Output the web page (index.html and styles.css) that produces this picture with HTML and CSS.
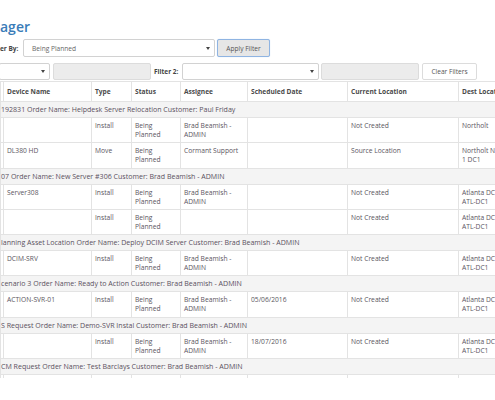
FILE: index.html
```html
<!DOCTYPE html>
<html>
<head>
<meta charset="utf-8">
<link rel="stylesheet" href="styles.css">
</head>
<body>
<div class="page">
  <h1 class="title">ager</h1>
  <div class="bar bar1">
    <span class="lbl">er By:</span>
    <div class="select sel-main"><span class="val">Being Planned</span><span class="caret"></span></div>
    <button class="btn btn-apply">Apply Filter</button>
  </div>
  <div class="bar bar2">
    <div class="select sel-a"><span class="val"></span><span class="caret"></span></div>
    <div class="input in-a"></div>
    <span class="lbl lbl2">Filter 2:</span>
    <div class="select sel-b"><span class="val"></span><span class="caret"></span></div>
    <div class="input in-b"></div>
    <button class="btn btn-clear">Clear Filters</button>
  </div>
  <table class="grid">
    <colgroup>
      <col class="c0"><col class="c1"><col class="c2"><col class="c3"><col class="c4"><col class="c5"><col class="c6"><col class="c7">
    </colgroup>
    <thead>
      <tr class="head"><th></th><th>Device Name</th><th>Type</th><th>Status</th><th>Assignee</th><th>Scheduled Date</th><th>Current Location</th><th>Dest Location</th></tr>
    </thead>
    <tbody>
      <tr class="grp"><td colspan="8">192831 Order Name: Helpdesk Server Relocation Customer: Paul Friday</td></tr>
      <tr class="row"><td></td><td></td><td>Install</td><td>Being<br>Planned</td><td>Brad Beamish -<br>ADMIN</td><td></td><td>Not Created</td><td>Northolt</td></tr>
      <tr class="row"><td></td><td>DL380 HD</td><td>Move</td><td>Being<br>Planned</td><td>Cormant Support</td><td></td><td>Source Location</td><td>Northolt N<br>1 DC1</td></tr>
      <tr class="grp"><td colspan="8">07 Order Name: New Server #306 Customer: Brad Beamish - ADMIN</td></tr>
      <tr class="row"><td></td><td>Server308</td><td>Install</td><td>Being<br>Planned</td><td>Brad Beamish -<br>ADMIN</td><td></td><td>Not Created</td><td>Atlanta DC<br>ATL-DC1</td></tr>
      <tr class="row"><td></td><td></td><td>Install</td><td>Being<br>Planned</td><td></td><td></td><td>Not Created</td><td>Atlanta DC<br>ATL-DC1</td></tr>
      <tr class="grp"><td colspan="8">lanning Asset Location Order Name: Deploy DCIM Server Customer: Brad Beamish - ADMIN</td></tr>
      <tr class="row"><td></td><td>DCIM-SRV</td><td>Install</td><td>Being<br>Planned</td><td>Brad Beamish -<br>ADMIN</td><td></td><td>Not Created</td><td>Atlanta DC<br>ATL-DC1</td></tr>
      <tr class="grp"><td colspan="8">cenario 3 Order Name: Ready to Action Customer: Brad Beamish - ADMIN</td></tr>
      <tr class="row"><td></td><td>ACTION-SVR-01</td><td>Install</td><td>Being<br>Planned</td><td>Brad Beamish -<br>ADMIN</td><td>05/06/2016</td><td>Not Created</td><td>Atlanta DC<br>ATL-DC1</td></tr>
      <tr class="grp"><td colspan="8">S Request Order Name: Demo-SVR Instal Customer: Brad Beamish - ADMIN</td></tr>
      <tr class="row"><td></td><td></td><td>Install</td><td>Being<br>Planned</td><td>Brad Beamish -<br>ADMIN</td><td>18/07/2016</td><td>Not Created</td><td>Atlanta DC<br>ATL-DC1</td></tr>
      <tr class="grp"><td colspan="8">CM Request Order Name: Test Barclays Customer: Brad Beamish - ADMIN</td></tr>
      <tr class="row"><td></td><td></td><td></td><td></td><td></td><td></td><td></td><td></td></tr>
    </tbody>
  </table>
</div>
</body>
</html>
```

FILE: styles.css
```css
html, body {
  margin: 0;
  padding: 0;
  background: #fff;
  overflow: hidden;
}
body {
  font-family: "Open Sans", "DejaVu Sans", sans-serif;
  color: #5a5560;
  width: 495px;
}
.page {
  height: 378px;
  overflow: hidden;
  width: 495px;
}
.title {
  margin: 0;
  padding-top: 18px;
  font-size: 14px;
  line-height: 18px;
  font-weight: 600;
  color: #3a7cb8;
}
.bar {
  display: flex;
  align-items: center;
  white-space: nowrap;
}
.bar1 {
  margin-top: 3px;
  height: 18px;
}
.bar2 {
  margin-top: 6px;
  height: 17px;
}
.lbl {
  font-size: 6.5px;
  font-weight: 700;
  color: #444;
}
.bar1 .lbl { width: 23px; }
.lbl2 { width: 28px; margin-left: 3px; }
.select {
  box-sizing: border-box;
  height: 100%;
  border: 1px solid #d2d2d2;
  border-radius: 2px;
  background: #fff;
  display: flex;
  align-items: center;
  justify-content: space-between;
  padding: 0 4px 0 8px;
}
.val {
  font-size: 6.6px;
  color: #666;
}
.caret {
  width: 0;
  height: 0;
  border-left: 2px solid transparent;
  border-right: 2px solid transparent;
  border-top: 3px solid #444;
}
.sel-main { width: 192px; }
.sel-a { width: 51px; margin-left: -1px; }
.sel-b { width: 137px; }
.input {
  box-sizing: border-box;
  height: 100%;
  border: 1px solid #dcdcdc;
  border-radius: 2px;
  background: #ececec;
}
.in-a { width: 98px; margin-left: 3px; }
.in-b { width: 98px; margin-left: 2px; }
.btn {
  box-sizing: border-box;
  height: 100%;
  font-family: inherit;
  font-size: 6.6px;
  color: #555;
  border-radius: 2px;
  padding: 0;
  margin: 0;
}
.btn-apply {
  width: 53px;
  margin-left: 2px;
  background: #e6e6e6;
  border: 1px solid #8fb4e2;
  box-shadow: 0 0 1px #b8d0ee;
}
.btn-clear {
  width: 55px;
  margin-left: 3px;
  background: #fff;
  border: 1px solid #dcdcdc;
}
.grid {
  margin-top: 1px;
  border-collapse: collapse;
  table-layout: fixed;
  width: 560px;
  font-size: 6.7px;
}
.c0 { width: 3px; }
.c1 { width: 88px; }
.c2 { width: 40px; }
.c3 { width: 49px; }
.c4 { width: 67px; }
.c5 { width: 100px; }
.c6 { width: 111px; }
.c7 { width: 102px; }
.grid th, .grid td {
  border: 1px solid #e3e3e3;
  padding: 0 3px;
  text-align: left;
  vertical-align: top;
  overflow: hidden;
  white-space: nowrap;
  line-height: 9px;
}
.grid th:first-child, .grid td:first-child { padding: 0; }
.head th {
  height: 20px;
  box-sizing: border-box;
  vertical-align: middle;
  font-weight: 700;
  color: #4a4a4a;
  font-size: 6.6px;
}
.grp td {
  height: 16px;
  box-sizing: border-box;
  background: #f4f4f4;
  vertical-align: middle;
  color: #5a5060;
  padding: 0;
  font-size: 7.05px;
}
.row td {
  height: 25.3px;
  box-sizing: border-box;
  padding-top: 3px;
}
```
